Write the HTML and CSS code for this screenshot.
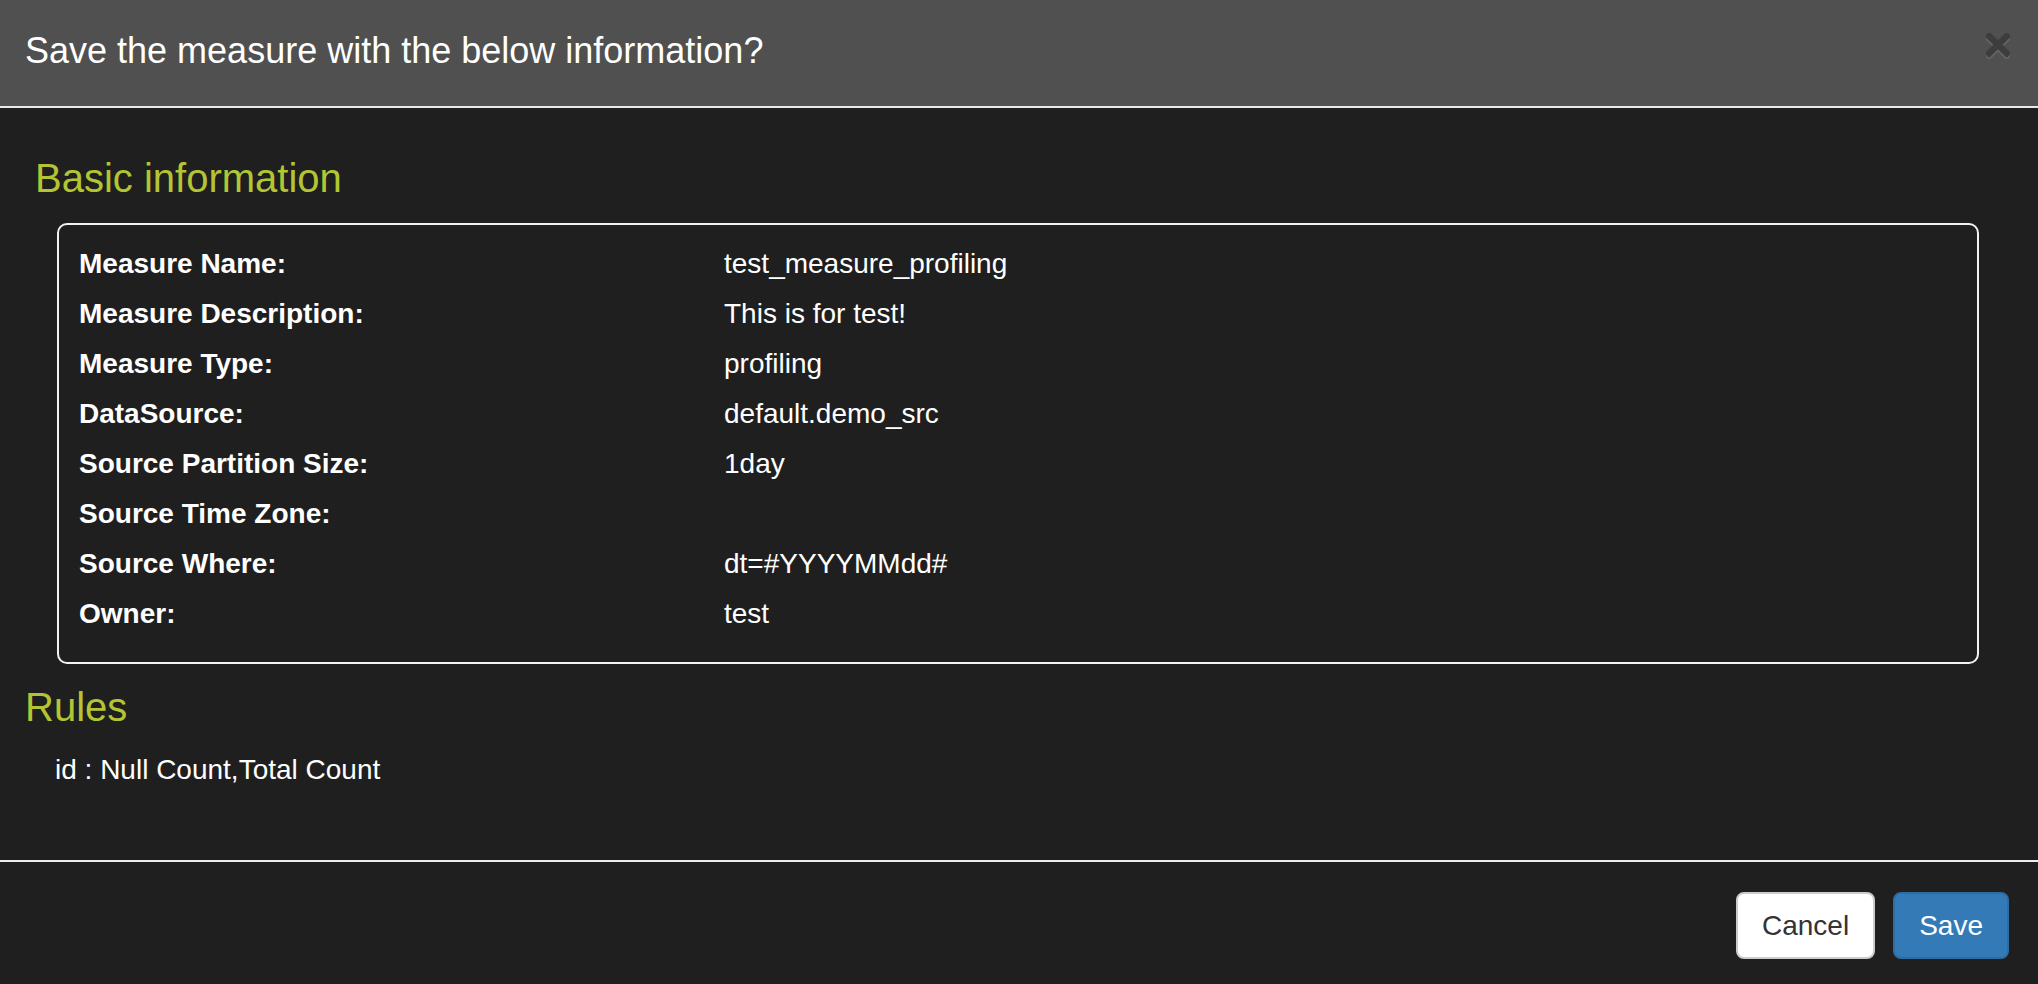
FILE: index.html
```html
<!DOCTYPE html>
<html lang="en">
<head>
<meta charset="utf-8">
<title>Save measure</title>
<link rel="stylesheet" href="styles.css">
</head>
<body>
<div class="modal">
  <div class="modal-header">
    <h4 class="modal-title">Save the measure with the below information?</h4>
    <button class="close" type="button" aria-label="Close">
      <svg width="24" height="26" viewBox="0 0 24 26">
        <g stroke="#636363" stroke-width="6.4" stroke-linecap="butt">
          <line x1="1" y1="3.5" x2="23" y2="25"/>
          <line x1="23" y1="3.5" x2="1" y2="25"/>
        </g>
        <g stroke="#3d3d3d" stroke-width="6.4" stroke-linecap="butt">
          <line x1="1" y1="1" x2="23" y2="22.5"/>
          <line x1="23" y1="1" x2="1" y2="22.5"/>
        </g>
      </svg>
    </button>
  </div>
  <div class="modal-body">
    <h3 class="section-title section-basic">Basic information</h3>
    <div class="info-box">
      <div class="info-grid">
        <div class="info-label">Measure Name:</div><div class="info-value">test_measure_profiling</div>
        <div class="info-label">Measure Description:</div><div class="info-value">This is for test!</div>
        <div class="info-label">Measure Type:</div><div class="info-value">profiling</div>
        <div class="info-label">DataSource:</div><div class="info-value">default.demo_src</div>
        <div class="info-label">Source Partition Size:</div><div class="info-value">1day</div>
        <div class="info-label">Source Time Zone:</div><div class="info-value"></div>
        <div class="info-label">Source Where:</div><div class="info-value">dt=#YYYYMMdd#</div>
        <div class="info-label">Owner:</div><div class="info-value">test</div>
      </div>
    </div>
    <h3 class="section-title section-rules">Rules</h3>
    <p class="rule-text">id : Null Count,Total Count</p>
  </div>
  <div class="modal-footer">
    <button class="btn btn-default" type="button">Cancel</button>
    <button class="btn btn-primary" type="button">Save</button>
  </div>
</div>
</body>
</html>
```
FILE: styles.css
```css
html, body {
  margin: 0;
  padding: 0;
}

body {
  background: #1f1f1f;
  color: #ffffff;
  font-family: "Liberation Sans", Arial, Helvetica, sans-serif;
  font-size: 28px;
  line-height: 40px;
  overflow: hidden;
}

.modal {
  display: flex;
  flex-direction: column;
}

.modal-header {
  background: #505050;
  height: 81px;
  padding: 25px 28px 0 25px;
  border-bottom: 2px solid #e9e9e9;
  display: flex;
  justify-content: space-between;
  align-items: flex-start;
}

.modal-title {
  margin: 0;
  font-size: 36px;
  font-weight: normal;
  line-height: 51px;
  color: #ffffff;
}

.close {
  margin-top: 8px;
  padding: 0;
  border: 0;
  background: transparent;
  width: 24px;
  height: 26px;
  display: block;
  cursor: pointer;
}

.close svg {
  display: block;
}

.modal-body {
  padding: 48px 25px 70px 25px;
}

.section-title {
  margin: 0;
  font-size: 40px;
  font-weight: normal;
  line-height: 44px;
  color: #b3c533;
}

.section-basic {
  margin: 0 0 23px 10px;
}

.section-rules {
  margin: 21px 0 21px 0;
}

.info-box {
  margin: 0 34px 0 32px;
  border: 2px solid #f2f2f2;
  border-radius: 10px;
  padding: 19px 20px 28px 20px;
}

.info-grid {
  display: grid;
  grid-template-columns: 645px 1fr;
  grid-auto-rows: 40px;
  row-gap: 10px;
}

.info-label {
  font-weight: bold;
}

.info-value {
  font-weight: normal;
}

.rule-text {
  margin: 0 0 0 30px;
  line-height: 40px;
}

.modal-footer {
  border-top: 2px solid #ececec;
  padding: 30px 29px 30px 30px;
  display: flex;
  justify-content: flex-end;
  gap: 18px;
}

.btn {
  font-family: "Liberation Sans", Arial, Helvetica, sans-serif;
  font-size: 28px;
  line-height: 39px;
  padding: 12px 24px;
  border-radius: 8px;
  border: 2px solid transparent;
  cursor: pointer;
}

.btn-default {
  background: #ffffff;
  color: #333333;
  border-color: #cccccc;
}

.btn-primary {
  background: #337ab7;
  color: #ffffff;
  border-color: #2e6da4;
}
```
